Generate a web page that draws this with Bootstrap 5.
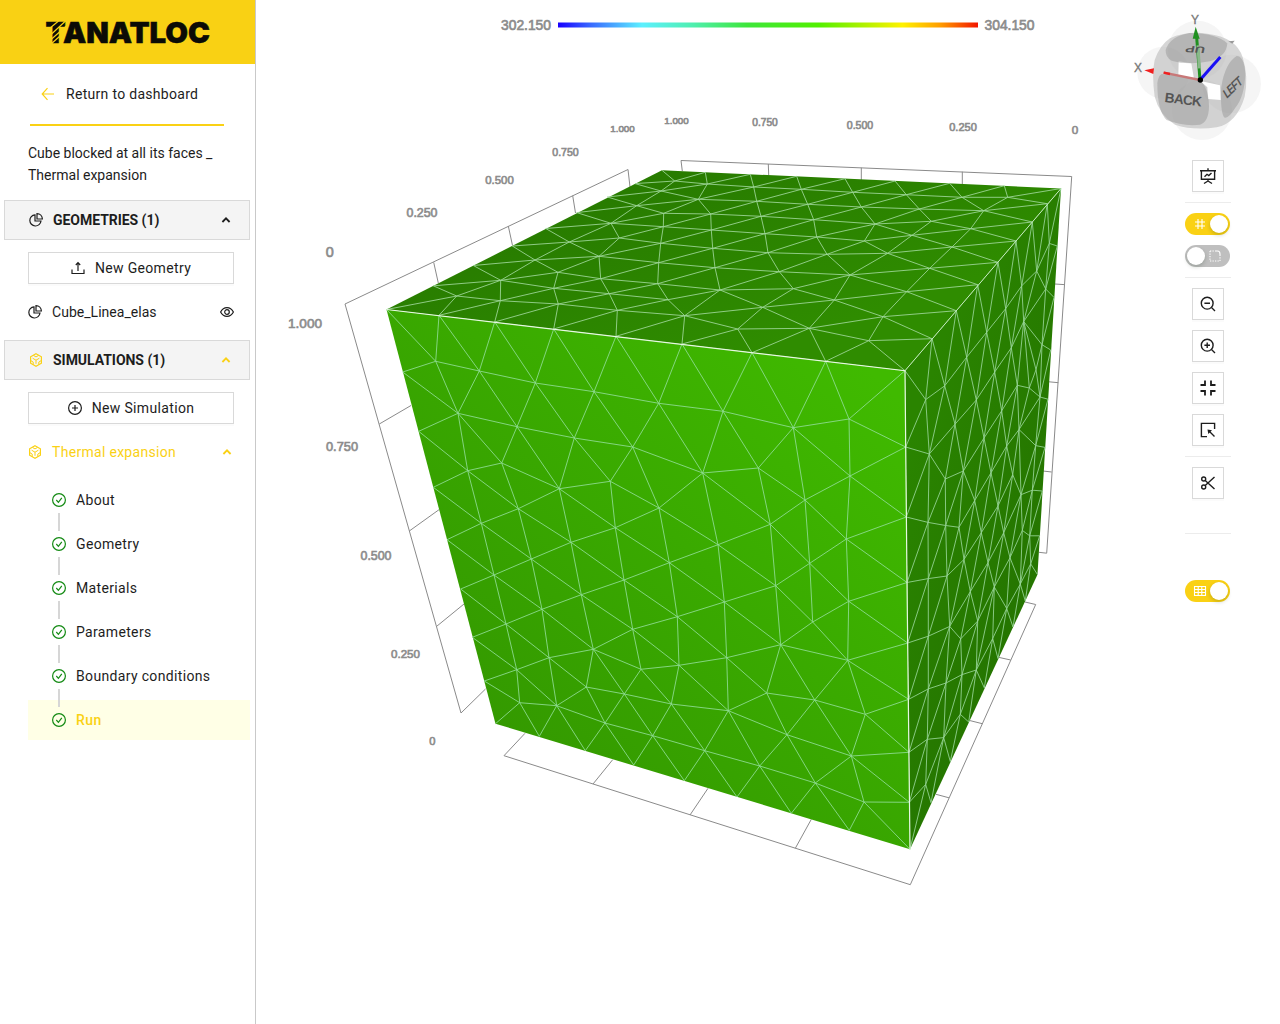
<!DOCTYPE html>
<html lang="en">
<head>
<meta charset="utf-8">
<meta name="viewport" content="width=device-width, initial-scale=1">
<title>Tanatloc - Thermal expansion</title>
<link href="https://cdn.jsdelivr.net/npm/bootstrap@5.3.0/dist/css/bootstrap.min.css" rel="stylesheet">
<style>
:root{--yl:#fad114;--ink:#1d1d1d;--ln:#d9d9d9}
body{font-family:Roboto,"Liberation Sans",sans-serif;font-size:14px;line-height:22px;color:var(--ink);background:#fff;letter-spacing:.3px}
svg.ic{width:14px;height:14px;fill:none;stroke:currentColor;stroke-width:1.2;flex:none;overflow:visible}
.side{width:256px;border-right:1px solid #c9c9c9}
.brandbar{height:64px;background:#f9d114}
.yl{color:var(--yl)}
.backlink{height:60px;padding-left:41px;gap:11px}
.rule-y{height:2px;background:var(--yl);margin:0 31px 0 30px}
.proj{padding:16px 28px 0;height:74px;letter-spacing:0}
.panel{margin:0 5px 0 4px;height:40px;background:#f4f4f4;border:1px solid var(--ln);padding:0 16px 0 24px;font-weight:700;letter-spacing:-.04px}
.panel span{margin-left:10px}
.btn-tool{--bs-btn-color:#1d1d1d;--bs-btn-border-color:#d9d9d9;--bs-btn-bg:#fff;--bs-btn-border-radius:0;--bs-btn-font-size:14px;--bs-btn-padding-x:0;--bs-btn-padding-y:0;box-shadow:0 2px 0 rgba(0,0,0,.015)}
.wide{margin:12px 21px 12px 28px;height:32px;gap:10px;letter-spacing:.34px}
.entry{height:32px;padding:0 21px 0 28px}
.entry span{margin-left:10px}
.fname{letter-spacing:.03px}
.step{margin-left:28px;margin-right:5px;height:40px;margin-bottom:4px;padding-left:24px;position:relative;gap:10px;letter-spacing:.34px}
.step svg{color:#138a13}
.step:not(:last-child)::after{content:"";position:absolute;left:30px;top:33px;width:2px;height:18px;background:#d6d6d6;z-index:1}
.step.on{background:#ffffe6;color:var(--yl);font-weight:500;letter-spacing:.5px}
.tools{position:absolute;left:929px;top:160px;width:46px}
.tools .btn{width:32px;height:32px}
.tools .btn+.btn{margin-top:10px}
.tools svg.ic{width:16px;height:16px;stroke-width:1.4}
.sep{width:46px;height:1px;background:#ececec;margin:10px 0}
.sep-far{margin:34px 0 46px}
.sw{width:45px;height:22px;border-radius:11px;background:#bfbfbf;padding:0 2px;color:#fff;align-self:flex-start}
.sw.on{background:var(--yl);padding-left:9px}
.sw.off{margin-top:10px;padding-right:9px}
.sw i{width:18px;height:18px;border-radius:50%;background:#fff;box-shadow:0 2px 4px rgba(0,35,11,.2)}
.tools .sw svg.ic{width:12px;height:12px;stroke-width:1.1}
.tools .thick svg.ic{stroke-width:1.8}
.ax text{font-family:"Liberation Sans",sans-serif;fill:#8c8c8c;stroke:#8c8c8c;stroke-width:.65;letter-spacing:0;text-anchor:middle}
</style>
<script src="https://cdn.jsdelivr.net/npm/bootstrap@5.3.0/dist/js/bootstrap.bundle.min.js"></script>
</head>
<body>
<svg width="0" height="0" class="d-block">
<defs>
<symbol id="pie" viewBox="0 0 14 14"><path d="M6 1.8A5.6 5.6 0 1 0 12 8H6z"/><path d="M8 .6A5.6 5.6 0 0 1 13.4 6H8z"/></symbol>
<symbol id="box" viewBox="0 0 14 14"><path d="M7 .8 12.4 3.8v6.4L7 13.2 1.6 10.2V3.8z"/><path d="M3.600 5.200 7 7.200l3.400-2M7 7.200v3.600M4.400 2.400 7 3.900l2.600-1.500M1.800 7.600l2.400 1.500v2.400M12.200 7.600 9.800 9.100v2.400" stroke-width="1"/></symbol>
<symbol id="up" viewBox="0 0 14 14"><path d="M3.400 9 7 5.3 10.600 9" stroke-width="1.8"/></symbol>
<symbol id="ok" viewBox="0 0 14 14"><circle cx="7" cy="7" r="6.4"/><path d="M4.300 7 6.400 9.300 9.800 4.800"/></symbol>
<symbol id="mag" viewBox="0 0 16 16"><circle cx="7.2" cy="7.2" r="5.9"/><path d="M11.5 11.5 15 15M4.4 7.2H10"/></symbol>
</defs></svg>
<div class="d-flex vh-100 overflow-hidden">
<aside class="side d-flex flex-column flex-shrink-0">
  <header class="brandbar d-flex align-items-center justify-content-center">
    <svg width="200" height="48" viewBox="27.500 8 200 48"><text x="45" y="43" font-family="Inter,sans-serif" font-weight="900" font-size="28.500" fill="#0b0b06" stroke="#0b0b06" stroke-width=".5" textLength="164.500" lengthAdjust="spacingAndGlyphs" letter-spacing="0">TANATLOC</text><path d="M46 31 58 21M50 35 65 21M50 40 67 25M50 44.500 64 32" stroke="#f9d114" stroke-width="1.200"/></svg>
  </header>
  <a class="backlink d-flex align-items-center text-reset text-decoration-none" href="#"><svg class="ic yl" viewBox="0 0 14 14"><path d="M13 7H1.500M6.500 1.200 1.200 7l5.300 5.800"/></svg><span>Return to dashboard</span></a>
  <div class="rule-y"></div>
  <div class="proj">Cube blocked at all its faces _<br>Thermal expansion</div>
  <div class="panel d-flex align-items-center"><svg class="ic"><use href="#pie"/></svg><span class="me-auto">GEOMETRIES (1)</span><svg class="ic"><use href="#up"/></svg></div>
  <button class="btn btn-tool wide d-flex align-items-center justify-content-center"><svg class="ic" viewBox="0 0 14 14"><path d="M1 8.500v4h12v-4M7 10V2M4.800 4 7 1.600 9.200 4"/></svg>New Geometry</button>
  <div class="entry d-flex align-items-center mb-2 pb-0"><svg class="ic"><use href="#pie"/></svg><span class="me-auto fname">Cube_Linea_elas</span><svg class="ic" viewBox="0 0 14 14"><path d="M.6 7C3.600 1.200 10.400 1.200 13.400 7 10.400 12.800 3.600 12.800.6 7z"/><circle cx="7" cy="7" r="2.300"/></svg></div>
  <div class="panel mt-1 d-flex align-items-center"><svg class="ic yl"><use href="#box"/></svg><span class="me-auto">SIMULATIONS (1)</span><svg class="ic yl"><use href="#up"/></svg></div>
  <button class="btn btn-tool wide d-flex align-items-center justify-content-center"><svg class="ic" viewBox="0 0 14 14"><circle cx="7" cy="7" r="6.400"/><path d="M7 4v6M4 7h6"/></svg>New Simulation</button>
  <div class="entry yl d-flex align-items-center mb-2"><svg class="ic"><use href="#box"/></svg><span class="me-auto">Thermal expansion</span><svg class="ic"><use href="#up"/></svg></div>
  <nav class="pt-1">
    <div class="step d-flex align-items-center"><svg class="ic"><use href="#ok"/></svg>About</div>
    <div class="step d-flex align-items-center"><svg class="ic"><use href="#ok"/></svg>Geometry</div>
    <div class="step d-flex align-items-center"><svg class="ic"><use href="#ok"/></svg>Materials</div>
    <div class="step d-flex align-items-center"><svg class="ic"><use href="#ok"/></svg>Parameters</div>
    <div class="step d-flex align-items-center"><svg class="ic"><use href="#ok"/></svg>Boundary conditions</div>
    <div class="step on d-flex align-items-center"><svg class="ic"><use href="#ok"/></svg>Run</div>
  </nav>
</aside>
<main class="position-relative flex-grow-1">
<svg class="d-block" width="1024" height="1024" viewBox="256 0 1024 1024">
<defs>
<linearGradient id="gF" gradientUnits="userSpaceOnUse" x1="880" y1="380" x2="520" y2="740"><stop offset="0" stop-color="#40ba00"/><stop offset="1" stop-color="#349a00"/></linearGradient>
<linearGradient id="gT" gradientUnits="userSpaceOnUse" x1="700" y1="170" x2="760" y2="350"><stop offset="0" stop-color="#287c00"/><stop offset="1" stop-color="#2f8c00"/></linearGradient>
<linearGradient id="gR" gradientUnits="userSpaceOnUse" x1="905" y1="450" x2="1050" y2="500"><stop offset="0" stop-color="#2a8400"/><stop offset="1" stop-color="#257600"/></linearGradient>
<linearGradient id="lut"><stop offset="0" stop-color="#1800ff"/><stop offset=".08" stop-color="#3a6cff"/><stop offset=".2" stop-color="#5cf0ff"/><stop offset=".32" stop-color="#4fefb0"/><stop offset=".45" stop-color="#3de63a"/><stop offset=".62" stop-color="#52f000"/><stop offset=".82" stop-color="#fff200"/><stop offset=".91" stop-color="#ff9d00"/><stop offset="1" stop-color="#f31500"/></linearGradient>
</defs>
<rect x="558" y="22.500" width="420" height="5" fill="url(#lut)"/>
<path fill="none" stroke="#8a8a8a" d="M630 187 628 169.500 345 304 461 713 485.500 689M575.500 213 572.700 195.700M512.500 245.500 508.300 226M438.300 283 433.700 262.300M379.300 424 411 405.500M409.300 531 439 509.700M436.700 626.300 464 604M525 733.300 504 755.700 910.300 884.700 1035.700 604.500 1025 602M593 784 612.700 759.700M690 815 708 788.300M795.300 848.300 811.300 819.300M1010.700 660 998 657.200M982.300 723.700 970 720.600M949 797.800 936 794.300M682.300 171 681 160.500 1071.700 176.500 1046.700 553.200 1039 552.300M768.300 164 768.700 175M861.300 167.700V180M962.300 171.700V184M1064 284.600 1055 284M1058.300 382.700 1049 381.800M1051.700 472 1043 471"/>
<g id="mesh"></g>
<g class="ax" id="labels"></g>
<g transform="translate(1120 0) scale(.33333)">
<g fill="#b0b0b0" fill-opacity=".13"><circle cx="232" cy="150" r="88"/><circle cx="130" cy="218" r="78"/><circle cx="335" cy="252" r="88"/><circle cx="246" cy="330" r="90"/></g>
<path d="M150 115Q200 92 262 101 350 112 368 172 386 230 374 290 350 370 290 382 220 392 165 374 118 345 104 290 95 220 104 180 120 135 150 115z" fill="#b4b4b4" fill-opacity=".55"/>
<path d="M176 184 214 190 222 236 242 243 300 256 302 300 264 297 262 262 240 242 175 227z" fill="#fff"/>
<path d="M137 150Q150 108 210 99 290 100 322 130 320 170 270 184 200 196 155 182 136 172 137 150zM350 168Q372 168 376 220 374 290 345 325 325 358 312 352 300 330 304 260 315 190 350 168zM125 222Q180 222 240 242 266 262 267 320 266 365 240 374 190 380 140 360 112 335 112 250 114 228 125 222z" fill="#8d8d8d" fill-opacity=".42"/>
<path d="M325 124 344 122 337 131z" fill="#999"/>
<path d="M240 240 230 112" stroke="#209020" stroke-width="9"/><path d="M238 205 234 136" stroke="#8ab88a" stroke-width="9"/><path d="M227 80 239 116 218 116z" fill="#209020"/>
<g font-family="Liberation Sans,sans-serif" font-weight="700" fill="#555" letter-spacing="0"><text x="133" y="306" font-size="41" textLength="112" transform="rotate(7 133 306)">BACK</text><text font-size="34" textLength="78" transform="translate(320 297) rotate(-44) skewX(-14) scale(.88 1.100)">LEFT</text><text font-size="40" transform="translate(257 140) rotate(183) skewX(-10) scale(1.050 .7)">UP</text></g>
<g font-family="Liberation Sans,sans-serif" fill="#777" stroke="#777" font-size="36" letter-spacing="0"><text x="213" y="73">Y</text><text x="42" y="217">X</text></g>
<path d="M240 240 131 218" stroke="#c87878" stroke-width="7"/><path d="M150 222 131 218" stroke="#f02020" stroke-width="7"/><path d="M73 211 102 205 100 222z" fill="#f02020"/>
<path d="M242 238 301 171" stroke="#1a10f5" stroke-width="9"/><circle cx="241" cy="240" r="8" fill="#000"/>
</g>
</svg>
<div class="tools d-flex flex-column align-items-center">
  <button class="btn btn-tool d-flex align-items-center justify-content-center"><svg class="ic" viewBox="0 0 16 16"><path d="M0 2.700h16M1.400 2.700v8.600h13.200V2.700M8 .3v2.400M4.500 8.700 7 6.300l1.800 1.300L11.500 5M8 11.300v2M4 15.500 8 13l4 2.500"/></svg></button>
  <div class="sep"></div>
  <div class="sw on d-flex align-items-center justify-content-between"><svg class="ic" viewBox="0 0 12 12"><path d="M4 1v10M8 1v10M1 4h10M1 8h10"/></svg><i></i></div>
  <div class="sw off d-flex align-items-center justify-content-between"><i></i><svg class="ic" viewBox="0 0 12 12"><path d="M6 1h2.500Q11 1 11 4v2"/><path d="M1 1h4M1 1v10h10V7" stroke-dasharray="1.300 1.200"/></svg></div>
  <div class="sep"></div>
  <button class="btn btn-tool d-flex align-items-center justify-content-center"><svg class="ic"><use href="#mag"/></svg></button>
  <button class="btn btn-tool d-flex align-items-center justify-content-center"><svg class="ic" viewBox="0 0 16 16"><use href="#mag"/><path d="M7.200 4.400V10"/></svg></button>
  <button class="btn btn-tool thick d-flex align-items-center justify-content-center"><svg class="ic" viewBox="0 0 16 16"><path d="M5 .5V5H.5M11 .5V5h4.500M5 15.500V11H.5M11 15.500V11h4.500"/></svg></button>
  <button class="btn btn-tool d-flex align-items-center justify-content-center"><svg class="ic" viewBox="0 0 16 16"><path d="M14.600 7V1.400H1.400v13.200H7M14.500 14.500 8.500 8.500"/><path d="M7.500 7.500 12 8.300 8.300 12z" fill="currentColor" stroke="none"/></svg></button>
  <div class="sep"></div>
  <button class="btn btn-tool d-flex align-items-center justify-content-center"><svg class="ic" viewBox="0 0 16 16"><circle cx="3.700" cy="4" r="2"/><circle cx="3.700" cy="12" r="2"/><path d="M5.200 5.500 14.500 14M5.200 10.500 14.500 2"/></svg></button>
  <div class="sep sep-far"></div>
  <div class="sw on d-flex align-items-center justify-content-between"><svg class="ic" viewBox="0 0 12 12"><path d="M.5 1.500h11v9H.5zM.5 4.500h11M.5 7.500h11M4.200 1.500v9M7.800 1.500v9"/></svg><i></i></div>
</div>
</main>
</div>
<script>
// Surface meshes: four corners, then the vertices of each visible face.
// Each face is flattened to a unit square, triangulated there, and drawn in perspective.
const faces=[
{fill:'url(#gT)',line:'#a0d89c',q:[[386.5,309.5],[905,370.7],[1061,188.5],[662,170.3]],p:`
439,315.3 494.7,322 553.7,329 616,336.3 682,344 752,352.7 825.7,361.3
433.3,285.8 473.3,265.5 512.3,246 545.7,228.5 576.7,212.6 607.3,197 635,183.6
705.3,172.3 750.3,174.3 796.7,176.3 845,178.7 895,181 949.7,183.3 1004.3,185.7
1047.3,203.7 1032.3,222 1016,241 998,262.3 977.7,284.7 956.3,310.7 932,338.7
674.7,181 707.3,184 753.7,187 801.3,189.3 852.7,192.3 906.3,194.7 962,197.3 1007.7,197.3
661,191 698.3,199.3 756.7,201.3 807.7,204.3 861.3,207 919.3,209 983.7,210.7
663.7,213.3 710.7,214 761,216.3 813.7,219.7 875,224 931.3,221.3 970.7,228.7
663.3,226.7 711.3,230 765,233.7 816.7,237 864.3,241 912,235.3 952,247
660.7,243.3 712.7,248.3 768,252.7 827,254.3 887.7,253.3 929.7,268.3
658.7,262.7 715,267.7 779.3,271.7 850,275 906.7,291.7
657.7,283.7 720,290 793.3,288.7 834.3,300 883,316.7
668,299.7 684.7,315.7 762.7,307.3 737.7,329 809.3,328.3 868.7,340.7
636.7,205.7 611,223.3 569.3,242 619.3,238 535,260 599,256.3 500.7,280.3 558,272.3 600.7,278.7
456.7,296 500.3,300.7 553.7,288.3 609.3,293.7 558.3,304 617.3,310.3`},
{fill:'url(#gR)',line:'#98d698',q:[[905,370.7],[1061,188.5],[1037.5,574.6],[910,849.3]],p:`
1047.3,203.7 1032.3,222 1016,241 998,262.3 977.7,284.7 956.3,310.7 932,338.7
905.7,447 906.3,517 907,582.5 907.7,643 908.7,699.3 909,752.3 909.3,802.3
1057.3,246 1054,297.4 1050.7,350 1048,399.2 1045,447.4 1042.3,491 1039.7,535.8
1025.3,601 1013,627 998,658.5 984.3,687.8 968.7,722 950.3,761.5 931,802.7
1049.3,243.4 1036.7,271 1045.7,289 1021.7,285.8 1005.7,308.6 1023.7,321.5 1042,344.7
986.7,332.2 1011.3,347.8 1036,369.7 966.7,357.2 994.7,372 1017.3,385.3 1029.3,388 1040,397
944.7,385.8 976.3,400 1001.7,410.8 1019,429.5 925.7,399.6 955,424.2 984,438 1006.7,446 1035.7,445.600
929.3,454 963.3,471 991,472.8 1012.7,474.600 945.3,479 974.7,500.5 998,505.9 1021,494.7 1032.3,490.2
928,522.4 945.7,525.5 959,527.3 981.3,532.7 1003.7,532.7 1022.3,530.4 1029.7,535.8
928.3,578.6 947,576 964,559.4 970.3,591.6 988,562.6 1010,557.7 1030.7,563.9 994.3,587 1020.3,584
928.3,636.2 949.7,626.4 960.7,638.9 977.7,621 1006.7,608.5 992.7,638.5
928.3,688.9 946,683 962,674.6 976.3,670 927.3,739.3 943.7,737.6 960.3,714.3 925.7,784.4`},
{fill:'url(#gF)',line:'#90dd96',q:[[386.5,309.5],[905,370.7],[910,849.3],[495.5,723.7]],p:`
439,315.3 494.7,322 553.7,329 616,336.3 682,344 752,352.7 825.7,361.3
402.7,372 418.7,431.3 433.3,487.3 447,539.7 460.7,589 472.3,637.3 484.3,681
539.3,736.3 585.3,750.7 633.7,765 684.3,780.7 737,797 791.3,813.3 849.3,830.3
905.7,447 906.3,517 907,582.5 907.7,643 908.7,699.3 909,752.3 909.3,802.3
435.7,361.3 479.3,371 535.3,383 594,391.7 658.7,403.3 458,413.3 517,426.7 574.3,438 632.7,447
467.7,470.7 501.7,463 559.3,488.7 610.3,481.3 481.3,523.3 518.3,508.7 571,542.3 615.3,527.7 659,508
494,575 531.3,559 624,580 723,411.3 793.3,427.7 849,419 702.7,473 758.3,468 850,476 805,500
770.3,524.3 718,544.7 669.3,562.7 846.3,539 809.7,563.3 775.7,585.7 724.3,602 848.7,601.3
542,609.3 581.3,594.7 506,624 632.7,629.3 677.3,616.7 812.7,622 593.3,649.3 549,657.7 516.7,669.7
641,669.3 679,665.3 726.7,657.7 780.7,644.7 847.7,660.3 519.7,702.7 556.7,705.7 586.3,687 624.3,694
671.3,704 728.3,710.7 766.7,693 814.7,700 865.3,714.3 605,723 652.7,735.7 704.7,750.7 787,734.7
759.7,766 851.3,756 815.3,783 864,802`}];
function flatten(q){
  const [[x0,y0],[x1,y1],[x2,y2],[x3,y3]]=q;
  const dx1=x1-x2,dx2=x3-x2,dy1=y1-y2,dy2=y3-y2,sx=x0-x1+x2-x3,sy=y0-y1+y2-y3,D=dx1*dy2-dx2*dy1;
  const g=(sx*dy2-dx2*sy)/D,h=(dx1*sy-sx*dy1)/D;
  const a=x1-x0+g*x1,b=x3-x0+h*x3,c=x0,d=y1-y0+g*y1,e=y3-y0+h*y3,f=y0;
  return ([x,y])=>{
    const A=a-g*x,B=b-h*x,C=x-c,E=d-g*y,F=e-h*y,G=y-f,det=A*F-B*E;
    return [(C*F-B*G)/det,(A*G-C*E)/det];
  };
}
let out='';
for(const f of faces){
  const P=f.q.concat(f.p.trim().split(/\s+/).map(s=>s.split(',').map(Number)));
  const to=flatten(f.q),snap=v=>v<.022?0:v>.978?1:v;
  const U=P.map(p=>to(p).map(snap)),n=U.length,E=new Set();
  for(let i=0;i<n;i++)for(let j=i+1;j<n;j++){
    if(Math.hypot(U[i][0]-U[j][0],U[i][1]-U[j][1])>.4)continue;
    for(let k=j+1;k<n;k++){
      const bx=U[j][0]-U[i][0],by=U[j][1]-U[i][1],cx=U[k][0]-U[i][0],cy=U[k][1]-U[i][1];
      const d=2*(bx*cy-by*cx);if(Math.abs(d)<1e-5)continue;
      const b2=bx*bx+by*by,c2=cx*cx+cy*cy,ux=(cy*b2-by*c2)/d,uy=(bx*c2-cx*b2)/d,r=ux*ux+uy*uy;
      if(r>.05)continue;
      let ok=true;
      for(let m=0;m<n&&ok;m++)if(m!==i&&m!==j&&m!==k){const ex=U[m][0]-U[i][0]-ux,ey=U[m][1]-U[i][1]-uy;if(ex*ex+ey*ey<r-1e-9)ok=false;}
      if(ok)[[i,j],[j,k],[i,k]].forEach(e=>E.add(e.join()));
    }
  }
  let d='';
  for(const e of E){
    const [i,j]=e.split(',').map(Number);
    if([0,1].some(t=>U[i][t]===U[j][t]&&(U[i][t]===0||U[i][t]===1)))continue;
    d+=`M${P[i]}L${P[j]}`;
  }
  out+=`<polygon points="${f.q.join(' ')}" fill="${f.fill}"/><path d="${d}" stroke="${f.line}" stroke-width=".85" fill="none"/>`;
}
out+='<path d="M905 370.700 1061 188.500" stroke="#c4ecc0"/><path d="M386.500 309.500 905 370.700 907 582 910 849" fill="none" stroke="#e6f8e2" stroke-width="1.200"/>';
document.getElementById('mesh').innerHTML=out;
// Axis labels: text, centre x, centre y, width
const L=[['302.150',526,25,50],['304.150',1009.5,25,50],['1.000',305,323.5,34],['0.750',342,447,32],['0.500',376,556,31],['0.250',405.5,653.5,29],['0',432.3,741,6.2],
['0',329.7,252,8],['0.250',422,213,31],['0.500',499.5,180.5,28.5],['0.750',565.5,152.5,26.5],['1.000',622.5,128.5,24.5],
['1.000',676.5,120.5,24.5],['0.750',765,122.5,25.5],['0.500',860,125,26.5],['0.250',963,127,27.5],['0',1075,129.5,6.5]];
document.getElementById('labels').innerHTML=L.map(([t,x,y,w])=>{const em=(t.replace('.','').length*.556+(t.includes('.')?.278:0)),s=w/em;
  return `<text x="${x}" y="${y+s*.35}" font-size="${s.toFixed(2)}">${t}</text>`}).join('');
</script>
</body>
</html>
